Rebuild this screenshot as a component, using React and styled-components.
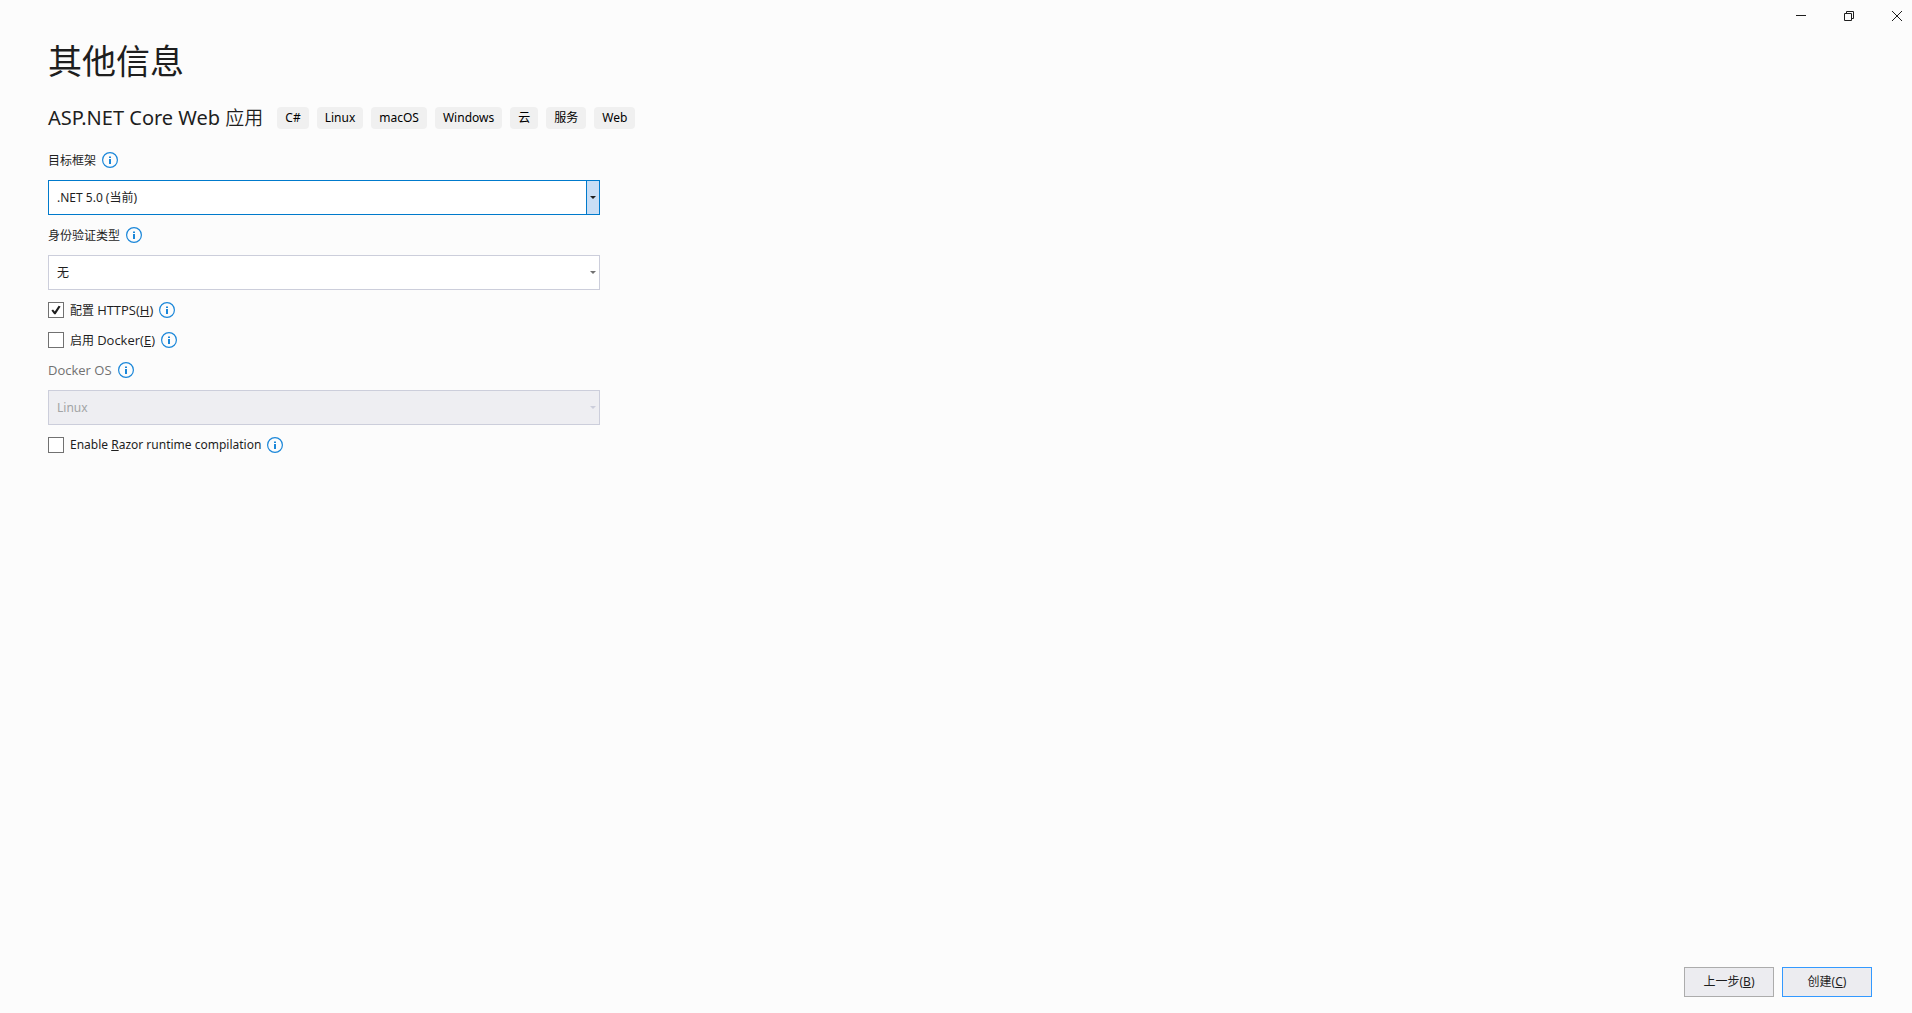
import React, { useState } from "react";
import styled, { createGlobalStyle } from "styled-components";

const GlobalStyle = createGlobalStyle`
  *, *::before, *::after { box-sizing: border-box; }
  body {
    margin: 0;
    background: #fcfcfc;
    color: #1e1e1e;
    font-family: "Noto Sans", "Noto Sans CJK SC", sans-serif;
    font-size: 12px;
    line-height: 16px;
  }
`;

const Window = styled.div`
  min-height: 100vh;
  display: flex;
  flex-direction: column;
`;

const TitleBar = styled.header`
  display: flex;
  justify-content: flex-end;
  height: 32px;
`;

const CaptionButton = styled.button`
  width: ${(p) => (p.$edge ? 39 : 48)}px;
  padding: 0 ${(p) => (p.$edge ? 10 : 19)}px 0 19px;
  border: 0;
  background: transparent;
  color: #1e1e1e;
  display: flex;
  align-items: center;
  justify-content: center;
  svg { display: block; flex: none; }
`;

const Main = styled.main`
  flex: 1;
  padding: 0 48px;
`;

const Title = styled.h1`
  margin: 6px 0 0;
  font-family: "Noto Sans CJK SC", sans-serif;
  font-size: 34px;
  line-height: 44px;
  font-weight: 400;
`;

const TemplateRow = styled.div`
  display: flex;
  align-items: center;
  gap: 14px;
  margin-top: 22px;
`;

const TemplateName = styled.h2`
  margin: 0;
  font-size: 20px;
  line-height: 28px;
  font-weight: 400;
`;

const Han = styled.span`
  font-size: 19px;
  font-weight: 350;
`;

const Tags = styled.ul`
  display: flex;
  gap: 8px;
  margin: 0;
  padding: 0;
  list-style: none;
`;

const Tag = styled.li`
  padding: 3px 8px;
  border-radius: 4px;
  background: #f0f0f0;
  color: #000;
`;

const Form = styled.form`
  display: flex;
  flex-direction: column;
  gap: 12px;
  max-width: 552px;
  margin-top: 20px;
`;

const Options = styled.div`
  display: flex;
  flex-direction: column;
  gap: 14px;
`;

const FieldRow = styled.div`
  display: flex;
  align-items: center;
  gap: 6px;
  height: 16px;
  color: ${(p) => (p.$muted ? "#717171" : "#1e1e1e")};
`;

const FieldLabel = styled.label`
  padding-top: 2px;
`;

const Latin = styled.span`
  font-family: "Open Sans", sans-serif;
  font-size: 13px;
`;

const InfoButton = styled.button`
  padding: 0;
  border: 0;
  background: transparent;
  color: #1b87d9;
  svg { display: block; }
`;

const CheckLabel = styled.label`
  display: flex;
  align-items: center;
  gap: 6px;
`;

const CheckBox = styled.input`
  appearance: none;
  width: 16px;
  height: 16px;
  margin: 0;
  border: 1px solid #717171;
  background: #fff;
  display: grid;
  place-items: center;
  &:checked::before {
    content: "";
    width: 10px;
    height: 10px;
    background: #1e1e1e;
    clip-path: polygon(4% 55%, 20% 45%, 38% 65%, 76% 8%, 96% 14%, 46% 92%, 32% 92%);
  }
`;

const SelectBox = styled.div`
  display: grid;
  grid-template-columns: 1fr 13px;
  height: 35px;
  border: 1px solid ${(p) => (p.$active ? "#007acc" : "#cccedb")};
  background: ${(p) => (p.$disabled ? "#eeeef2" : "#fff")};
`;

const Select = styled.select`
  grid-area: 1 / 1 / 2 / 3;
  appearance: none;
  min-width: 0;
  padding: 0 20px 0 8px;
  border: 0;
  outline: 0;
  background: transparent;
  color: #1e1e1e;
  font: inherit;
  &:disabled { color: #a2a4a5; opacity: 1; }
`;

const SelectArrow = styled.span`
  grid-area: 1 / 2 / 2 / 3;
  pointer-events: none;
  display: grid;
  place-items: center;
  border-left: 1px solid ${(p) => (p.$active ? "#007acc" : "transparent")};
  background: ${(p) => (p.$active ? "#c9def5" : "transparent")};
  color: ${(p) => (p.$disabled ? "#cccedb" : p.$active ? "#1e1e1e" : "#717171")};
  svg { display: block; }
`;

const Footer = styled.footer`
  display: flex;
  justify-content: flex-end;
  gap: 8px;
  padding: 0 40px 16px;
`;

const ActionButton = styled.button`
  width: 90px;
  height: 30px;
  padding: 0;
  border: 1px solid ${(p) => (p.$primary ? "#3399ff" : "#acacac")};
  background: #ececf0;
  color: #1e1e1e;
  font: inherit;
`;

const Info = ({ about }) => (
  <InfoButton type="button" aria-label={about}>
    <svg width="16" height="16" viewBox="0 0 16 16" fill="none">
      <circle cx="8" cy="8" r="7.4" stroke="currentColor" strokeWidth="1.2" />
      <path d="M7 4.500h2v1.500h-2zM7 7h2v5h-2z" fill="currentColor" />
    </svg>
  </InfoButton>
);

const Dropdown = ({ id, options, active, disabled }) => (
  <SelectBox $active={active} $disabled={disabled}>
    <Select id={id} disabled={disabled}>
      {options.map((o) => (
        <option key={o}>{o}</option>
      ))}
    </Select>
    <SelectArrow $active={active} $disabled={disabled}>
      <svg width="6" height="3" viewBox="0 0 6 3">
        <path d="M0 0h6L3 3z" fill="currentColor" />
      </svg>
    </SelectArrow>
  </SelectBox>
);

const Option = ({ label, about, initial = false }) => {
  const [checked, setChecked] = useState(initial);
  return (
    <FieldRow>
      <CheckLabel>
        <CheckBox type="checkbox" checked={checked} onChange={() => setChecked(!checked)} />
        <span>{label}</span>
      </CheckLabel>
      <Info about={about} />
    </FieldRow>
  );
};

const tags = ["C#", "Linux", "macOS", "Windows", "云", "服务", "Web"];

export default function App() {
  return (
    <Window lang="zh-CN">
      <GlobalStyle />
      <TitleBar>
        <CaptionButton aria-label="最小化">
          <svg width="10" height="10" viewBox="0 0 10 10">
            <path d="M0 4h10v1H0z" fill="currentColor" />
          </svg>
        </CaptionButton>
        <CaptionButton aria-label="还原">
          <svg width="10" height="10" viewBox="0 0 10 10" fill="none" stroke="currentColor">
            <path d="M.5 2.5h7v7h-7zM2.5 2.5v-2h7v7h-2" />
          </svg>
        </CaptionButton>
        <CaptionButton $edge aria-label="关闭">
          <svg width="10" height="10" viewBox="0 0 10 10" fill="none" stroke="currentColor">
            <path d="M0 0l10 10M10 0L0 10" />
          </svg>
        </CaptionButton>
      </TitleBar>
      <Main>
        <Title>其他信息</Title>
        <TemplateRow>
          <TemplateName>ASP.NET Core Web <Han>应用</Han></TemplateName>
          <Tags>
            {tags.map((t) => (
              <Tag key={t}>{t}</Tag>
            ))}
          </Tags>
        </TemplateRow>
        <Form>
          <FieldRow>
            <FieldLabel htmlFor="framework">目标框架</FieldLabel>
            <Info about="目标框架" />
          </FieldRow>
          <Dropdown id="framework" options={[".NET 5.0 (当前)"]} active />
          <FieldRow>
            <FieldLabel htmlFor="auth">身份验证类型</FieldLabel>
            <Info about="身份验证类型" />
          </FieldRow>
          <Dropdown id="auth" options={["无"]} />
          <Options>
            <Option
              initial
              label={<>配置 <Latin>HTTPS(<u>H</u>)</Latin></>}
              about="配置 HTTPS"
            />
            <Option
              label={<>启用 <Latin>Docker(<u>E</u>)</Latin></>}
              about="启用 Docker"
            />
            <FieldRow $muted>
              <label htmlFor="docker-os"><Latin>Docker OS</Latin></label>
              <Info about="Docker OS" />
            </FieldRow>
          </Options>
          <Dropdown id="docker-os" options={["Linux"]} disabled />
          <Option
            label={<>Enable <u>R</u>azor runtime compilation</>}
            about="Razor runtime compilation"
          />
        </Form>
      </Main>
      <Footer>
        <ActionButton type="button">上一步(<u>B</u>)</ActionButton>
        <ActionButton type="button" $primary>创建(<u>C</u>)</ActionButton>
      </Footer>
    </Window>
  );
}
